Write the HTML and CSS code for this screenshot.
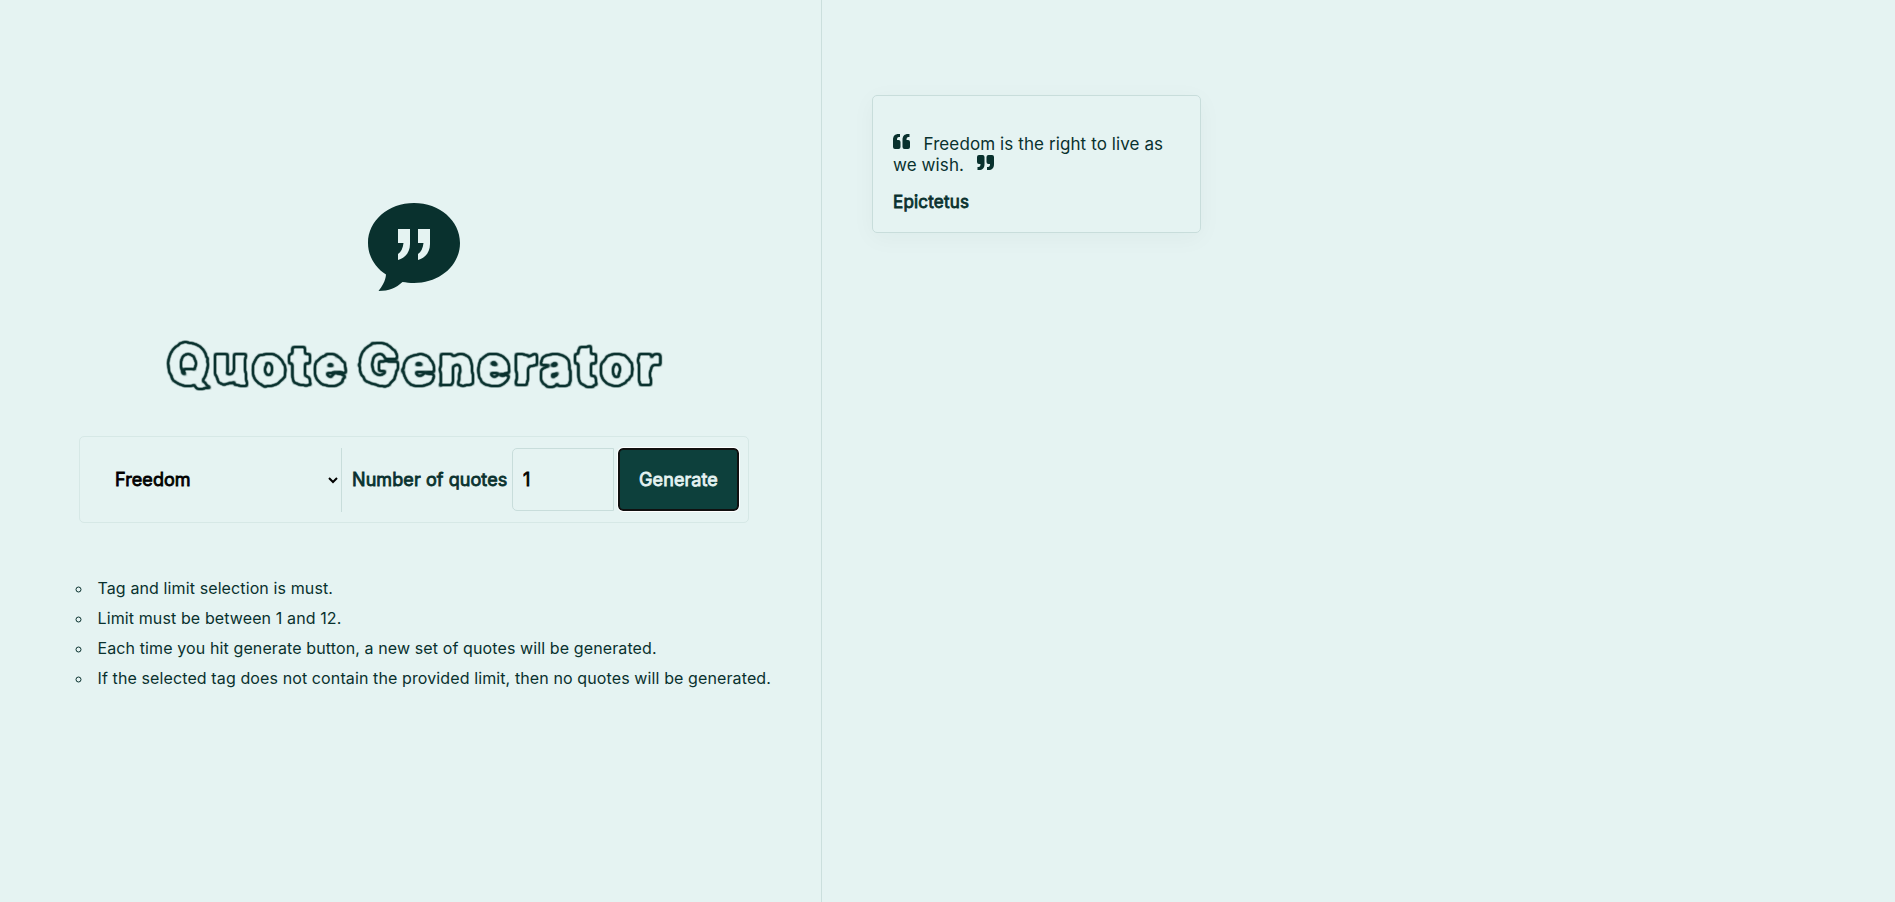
FILE: index.html
```html
<!DOCTYPE html>
<html lang="en">
<head>
<meta charset="utf-8">
<title>Quote Generator</title>
<link rel="stylesheet" href="styles.css">
</head>
<body>
<svg class="defs" width="0" height="0" aria-hidden="true">
  <filter id="rough-outline" x="-5%" y="-10%" width="110%" height="120%" color-interpolation-filters="sRGB">
    <feGaussianBlur in="SourceAlpha" stdDeviation="0.7" result="soft"/>
    <feComponentTransfer in="soft" result="round"><feFuncA type="linear" slope="3" intercept="-1"/></feComponentTransfer>
    <feTurbulence type="fractalNoise" baseFrequency="0.07" numOctaves="1" seed="4" result="noise"/>
    <feDisplacementMap in="round" in2="noise" scale="4" xChannelSelector="R" yChannelSelector="G" result="rough"/>
    <feGaussianBlur in="rough" stdDeviation="0.8" result="edge"/>
    <feComponentTransfer in="edge" result="line"><feFuncA type="table" tableValues="0 0.8 1 1 1 0.8 0"/></feComponentTransfer>
    <feFlood flood-color="#09312e"/>
    <feComposite in2="line" operator="in"/>
  </filter>
</svg>
<main class="layout">
  <section class="panel">
    <svg class="logo" viewBox="0 0 92 88" aria-hidden="true">
      <path class="ink" d="M46 0C71.500 0 92 17.500 92 40S71.500 80 46 80C42 80 38 79.500 34.500 79C28 85 21 88 10.500 88C14 83.500 17.500 78 18 71.500C7 64.500 0 53 0 40C0 17.500 20.500 0 46 0Z"/>
      <path class="paper" d="M30 26H42V41C42 49.500 37 55 30 57V51C33 49 35 45 35.500 40H30ZM50 26H62V41C62 49.500 57 55 50 57V51C53 49 55 45 55.500 40H50Z"/>
    </svg>
    <h1 class="title">Quote Generator</h1>
    <form class="controls">
      <select class="tag"><option>Freedom</option></select>
      <label class="label" for="limit">Number of quotes</label>
      <input class="limit" id="limit" type="text" value="1">
      <button class="generate" type="button">Generate</button>
    </form>
    <ul class="notes">
      <li>Tag and limit selection is must.</li>
      <li>Limit must be between 1 and 12.</li>
      <li>Each time you hit generate button, a new set of quotes will be generated.</li>
      <li>If the selected tag does not contain the provided limit, then no quotes will be generated.</li>
    </ul>
  </section>
  <section class="results">
    <article class="card">
      <p class="quote"><svg class="mark open" viewBox="0 0 17 15"><path d="M7 0V3H6C4.500 3 4 4 4 6H5.500Q7.500 6 7.500 8V13Q7.500 15 5.500 15H2Q0 15 0 13V6C0 2 2 0 5.500 0ZM16.500 0V3H15.500C14 3 13.500 4 13.500 6H15Q17 6 17 8V13Q17 15 15 15H11.500Q9.500 15 9.500 13V6C9.500 2 11.500 0 15 0Z"/></svg>Freedom is the right to live as we wish.<svg class="mark close" viewBox="0 0 17 15"><path transform="rotate(180 8.500 7.500)" d="M7 0V3H6C4.500 3 4 4 4 6H5.500Q7.500 6 7.500 8V13Q7.500 15 5.500 15H2Q0 15 0 13V6C0 2 2 0 5.500 0ZM16.500 0V3H15.500C14 3 13.500 4 13.500 6H15Q17 6 17 8V13Q17 15 15 15H11.500Q9.500 15 9.500 13V6C9.500 2 11.500 0 15 0Z"/></svg></p>
      <p class="author">Epictetus</p>
    </article>
  </section>
</main>
</body>
</html>
```
FILE: styles.css
```css
* { box-sizing: border-box; }
body {
  margin: 0;
  background: #e5f3f2;
  color: #09312e;
  font-family: Inter, sans-serif;
}
.defs { position: absolute; }
.layout { display: flex; height: 902px; overflow: hidden; }
.panel {
  width: 822px;
  flex: none;
  border-right: 1px solid #cbdfdd;
  padding: 203px 50px 0 79px;
}
.logo { display: block; width: 92px; height: 88px; margin-left: 289px; }
.ink { fill: #09312e; }
.paper { fill: #e5f3f2; }
.title {
  margin: 34px 0 0;
  width: 674px;
  height: 80px;
  line-height: 80px;
  text-align: center;
  white-space: nowrap;
  font-size: 53px;
  font-weight: 900;
  letter-spacing: 4.100px;
  word-spacing: -6px;
  color: #09312e;
  -webkit-text-stroke: 2px #09312e;
  filter: url(#rough-outline);
}
.controls {
  display: flex;
  align-items: center;
  width: 670px;
  height: 87px;
  margin-top: 31px;
  padding: 0 9px 0 10px;
  border: 1px solid #d6e8e6;
  border-radius: 5px;
}
.tag, .label, .limit, .generate {
  flex: none;
  font-family: Inter, sans-serif;
  font-size: 18px;
  font-weight: 400;
  letter-spacing: 0.080px;
  -webkit-text-stroke: 0.800px currentColor;
}
.tag {
  width: 252px;
  height: 64px;
  padding: 0 1px 0 21px;
  border: 0;
  border-right: 1px solid #c8dddb;
  background: transparent;
  color: #000;
}
.label { width: 170px; padding-left: 10px; white-space: nowrap; }
.limit {
  width: 102px;
  height: 63px;
  margin-right: 4px;
  padding: 0 10px;
  border: 1px solid #c8dddb;
  border-radius: 5px 0 0 5px;
  background: transparent;
  color: #000;
}
.generate {
  width: 121px;
  height: 63px;
  padding: 0;
  border: 2px solid #101010;
  border-radius: 5px;
  outline: 1px solid #fff;
  background: #0d403c;
  color: #e5f3f2;
}
.notes {
  margin: 50px 0 0;
  padding: 0 0 0 14px;
  list-style: circle;
  font-size: 16px;
  line-height: 30px;
  letter-spacing: 0.112px;
  white-space: nowrap;
}
.notes li { padding-left: 4.500px; }
.results { flex: 1; padding: 95px 50px; }
.card {
  width: 329px;
  height: 138px;
  padding: 38px 20px 0;
  border: 1px solid #c8dddb;
  border-radius: 5px;
  box-shadow: 0 5px 25px rgba(9, 49, 46, 0.040);
}
.quote { margin: 0; font-size: 17px; line-height: 21px; letter-spacing: 0.100px; }
.mark { width: 17px; height: 15px; fill: #09312e; vertical-align: 1px; }
.open { margin-right: 13.500px; }
.close { margin-left: 13px; }
.author {
  margin: 16px 0 0;
  font-size: 17px;
  line-height: 21px;
  letter-spacing: 0.200px;
  -webkit-text-stroke: 0.800px currentColor;
}
```
